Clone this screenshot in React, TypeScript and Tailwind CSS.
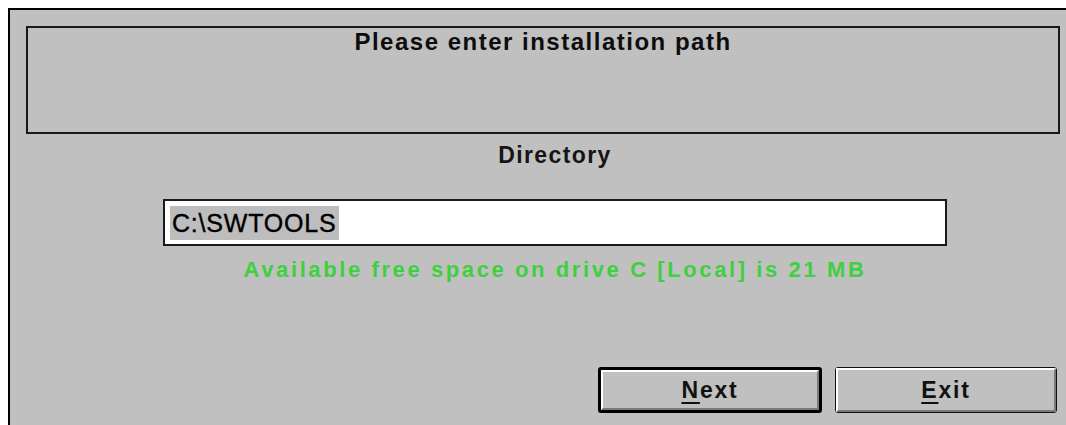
import type { ReactNode } from "react";

const FONT = "[font-family:'Liberation_Sans',Arial,sans-serif]";

function BevelButton({
  hotkey,
  rest,
  isDefault,
}: {
  hotkey: string;
  rest: string;
  isDefault?: boolean;
}) {
  return (
    <button
      type="button"
      className={
        isDefault
          ? "h-[46px] w-[224px] rounded-[3px] border-[3px] border-black bg-[#c0c0c0] p-0"
          : "h-[46px] w-[222px] rounded-[3px] border border-[#111] bg-[#c0c0c0] p-0"
      }
    >
      <span className="flex h-full w-full items-center justify-center border-t-2 border-l-2 border-r-2 border-b-2 border-t-white border-l-white border-r-[#7a7a7a] border-b-[#7a7a7a]">
        <Label hotkey={hotkey} rest={rest} />
      </span>
    </button>
  );
}

function Label({ hotkey, rest }: { hotkey: string; rest: string }) {
  return (
    <span className={`${FONT} text-[23px] font-bold leading-none tracking-[1.8px] text-[#111]`}>
      <span className="underline decoration-2 underline-offset-[4px]">{hotkey}</span>
      {rest}
    </span>
  );
}

function Panel({ children }: { children: ReactNode }) {
  return (
    <div className="ml-[16px] mt-[16px] h-[108px] w-[1034px] border-2 border-[#1a1a1a]">
      {children}
    </div>
  );
}

export default function App() {
  return (
    <div className="h-[425px] w-[1066px] overflow-hidden bg-white">
      <div className="ml-[8px] mt-[8px] h-[417px] w-[1058px] border-t-2 border-l-2 border-black bg-[#c0c0c0]">
        <Panel>
          <p
            className={`${FONT} text-center text-[24px] font-bold leading-[28px] tracking-[1.5px] text-[#0d0d0d]`}
          >
            Please enter installation path
          </p>
        </Panel>

        <div className="ml-[153px] flex w-[784px] flex-col items-center">
          <p
            className={`${FONT} mt-[7px] text-[23px] font-bold leading-[28px] tracking-[1.4px] text-[#151515]`}
          >
            Directory
          </p>

          <div className="mt-[30px] flex h-[47px] w-full items-center border-2 border-[#1a1a1a] bg-white pl-[5px]">
            <span
              className={`${FONT} bg-[#bdbdbd] px-[2px] text-[25px] leading-[34px] tracking-[0.8px] text-black [-webkit-text-stroke:0.4px_black]`}
            >
              C:\SWTOOLS
            </span>
          </div>

          <p
            className={`${FONT} mt-[11px] whitespace-nowrap text-[22px] font-bold leading-[26px] tracking-[2.6px] text-[#3fcf3f]`}
          >
            Available free space on drive C [Local] is 21 MB
          </p>
        </div>

        <div className="mt-[84px] flex justify-end gap-[13px] pr-[9px]">
          <BevelButton hotkey="N" rest="ext" isDefault />
          <BevelButton hotkey="E" rest="xit" />
        </div>
      </div>
    </div>
  );
}
